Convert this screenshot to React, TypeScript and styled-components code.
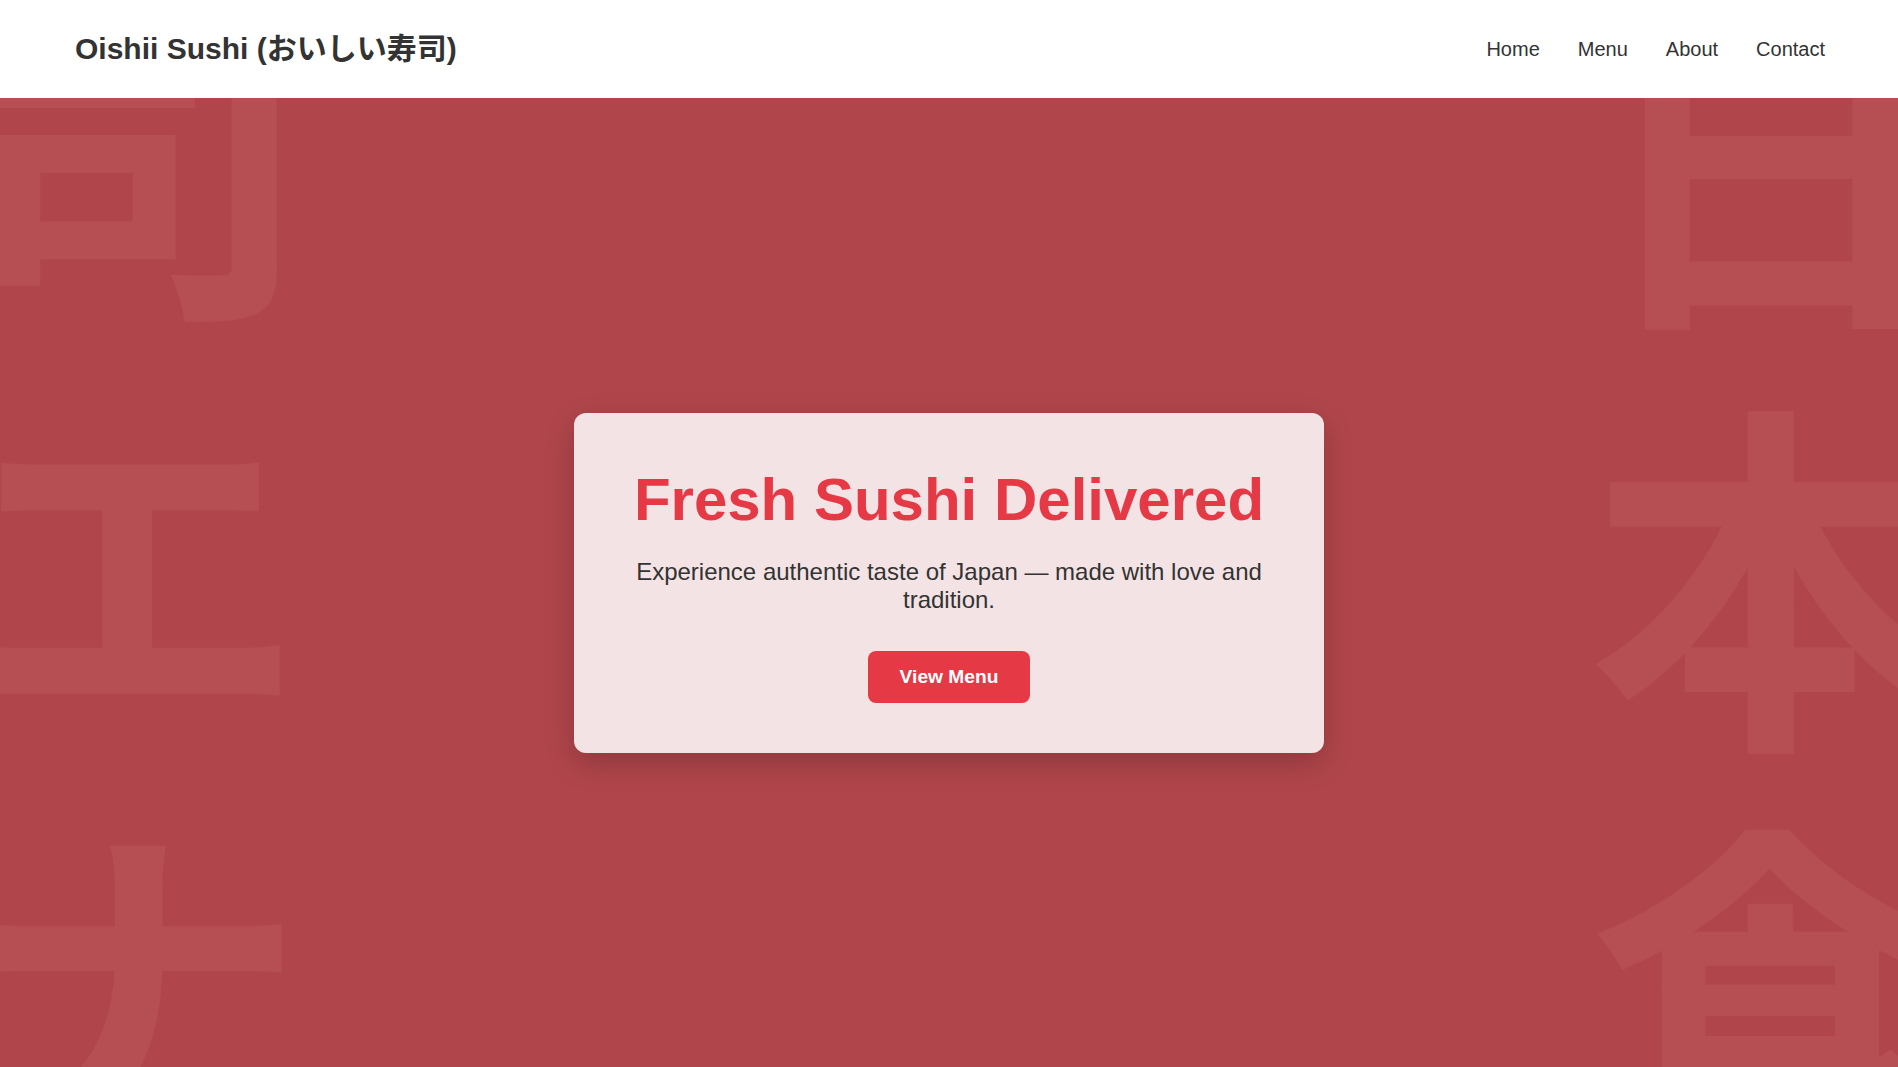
import React from "react";
import styled, { createGlobalStyle } from "styled-components";

const GlobalStyle = createGlobalStyle`
  html, body {
    margin: 0;
    padding: 0;
  }
  body {
    font-family: "Liberation Sans", Arial, "Noto Sans CJK JP", sans-serif;
    color: #333;
    background: #b0464b;
  }
  * { box-sizing: border-box; }
`;

const Page = styled.div`
  min-height: 100vh;
  display: flex;
  flex-direction: column;
`;

const Header = styled.header`
  height: 98px;
  flex-shrink: 0;
  background: #ffffff;
  display: flex;
  align-items: center;
  justify-content: space-between;
  padding: 0 73px 0 75px;
  position: relative;
  z-index: 2;
`;

const Logo = styled.div`
  font-family: "Liberation Sans", Arial, "Noto Sans CJK JP", sans-serif;
  font-size: 30px;
  font-weight: 700;
  color: #333;
  line-height: 1.15;
`;

const Nav = styled.nav`
  display: flex;
  gap: 38px;
`;

const NavLink = styled.a`
  font-size: 20px;
  color: #333;
  text-decoration: none;
  line-height: 1.15;
  cursor: pointer;
`;

const Hero = styled.section`
  flex: 1;
  position: relative;
  overflow: hidden;
  background: #b0464b;
  display: flex;
  align-items: center;
  justify-content: center;
`;

const Kanji = styled.div<{ $side: "left" | "right" }>`
  position: absolute;
  top: ${(p) => (p.$side === "left" ? "-129px" : "-118px")};
  ${(p) => (p.$side === "left" ? "left: -54px;" : "right: -55px;")}
  writing-mode: vertical-rl;
  white-space: nowrap;
  font-family: "Noto Sans CJK JP", sans-serif;
  font-weight: 700;
  font-size: 365px;
  line-height: 1;
  letter-spacing: 55px;
  color: #b54f53;
  user-select: none;
  pointer-events: none;
`;

const Card = styled.div`
  position: relative;
  z-index: 1;
  width: 750px;
  padding: 52px 48px 50px;
  background: rgba(255, 255, 255, 0.85);
  border-radius: 12px;
  box-shadow: 0 10px 30px rgba(0, 0, 0, 0.2);
  text-align: center;
`;

const Title = styled.h1`
  margin: 0 0 24px;
  font-size: 60px;
  font-weight: 700;
  color: #e63946;
  line-height: normal;
`;

const Lead = styled.p`
  margin: 0 0 37px;
  font-size: 24px;
  color: #333;
  line-height: normal;
`;

const Button = styled.button`
  font-family: "Liberation Sans", Arial, sans-serif;
  font-size: 19.2px;
  font-weight: 700;
  color: #ffffff;
  background: #e63946;
  border: none;
  border-radius: 8px;
  padding: 15px 32px;
  line-height: normal;
  cursor: pointer;
`;

export default function App() {
  return (
    <Page>
      <GlobalStyle />
      <Header>
        <Logo>Oishii Sushi (おいしい寿司)</Logo>
        <Nav>
          <NavLink>Home</NavLink>
          <NavLink>Menu</NavLink>
          <NavLink>About</NavLink>
          <NavLink>Contact</NavLink>
        </Nav>
      </Header>
      <Hero>
        <Kanji $side="left" aria-hidden="true">司エナ</Kanji>
        <Kanji $side="right" aria-hidden="true">日本食</Kanji>
        <Card>
          <Title>Fresh Sushi Delivered</Title>
          <Lead>Experience authentic taste of Japan — made with love and tradition.</Lead>
          <Button>View Menu</Button>
        </Card>
      </Hero>
    </Page>
  );
}
